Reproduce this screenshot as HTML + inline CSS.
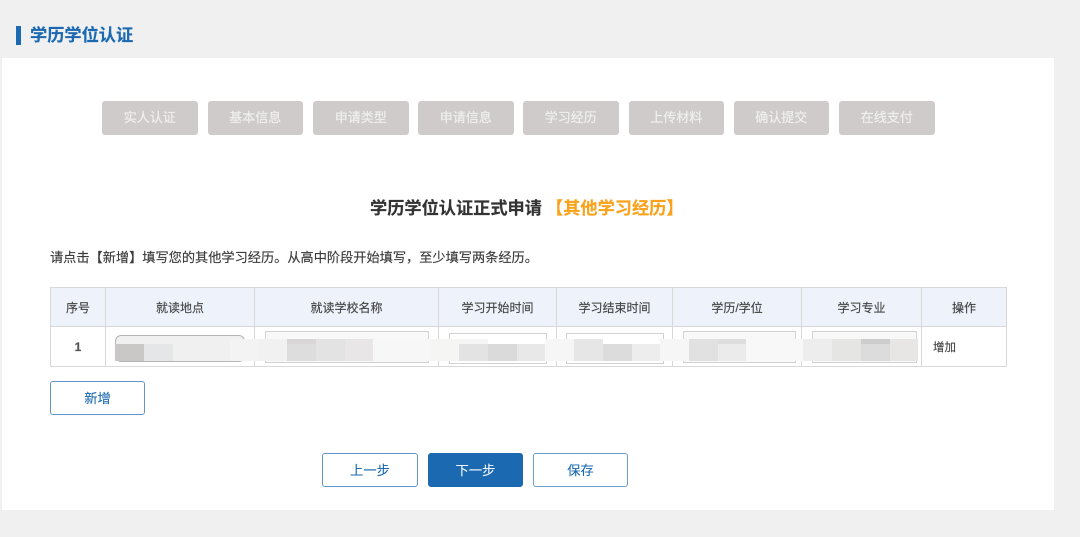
<!DOCTYPE html>
<html lang="zh-CN"><head><meta charset="utf-8"><title>学历学位认证</title>
<style>
html,body{margin:0;padding:0;width:1080px;height:537px;overflow:hidden;background:#f0f0f0}
body{font-family:"Liberation Sans","Noto Sans CJK SC",sans-serif;color:#444}
#w{left:0;top:0;width:1080px;height:537px;background:#f0f0f0;filter:blur(.35px)}
div{position:absolute;box-sizing:border-box}
.t{white-space:nowrap;text-align:center;line-height:20px;height:20px;-webkit-text-stroke:.15px currentColor}
.s{top:101px;width:95.500px;height:34px;background:#cfcbcb;border-radius:3px;color:#f0eeee;font-size:13px;line-height:34px;text-align:center;-webkit-text-stroke:.2px currentColor}
.l{background:#d8d8d8}
.h{top:288px;height:38px;background:#eef3fb}
.th{top:298px;font-size:12px}
.in{border:1px solid #d2d2d2;background:#fff}
.m{height:22px;top:339px}
.b{border:1px solid #1b69b0;border-radius:3px;background:#fff;color:#1b69b0;font-size:13.3px;text-align:center;height:34px;line-height:34px;-webkit-text-stroke:.1px currentColor}
</style></head><body><div id="w">
<div style="left:16px;top:26px;width:5px;height:19px;background:#1b69b0"></div>
<div class="t" style="left:30px;top:25px;font-size:17.2px;font-weight:700;color:#1b69b0">学历学位认证</div>
<div style="left:2px;top:58px;width:1052px;height:452px;background:#fff"></div>

<div class="s" style="left:102px">实人认证</div>
<div class="s" style="left:207.5px">基本信息</div>
<div class="s" style="left:313px">申请类型</div>
<div class="s" style="left:418px">申请信息</div>
<div class="s" style="left:523px">学习经历</div>
<div class="s" style="left:628.5px">上传材料</div>
<div class="s" style="left:733.500px">确认提交</div>
<div class="s" style="left:839px">在线支付</div>

<div class="t" style="left:370px;top:198px;font-size:17.2px;font-weight:700;color:#333">学历学位认证正式申请</div>
<div class="t" style="left:546px;top:198px;font-size:17.2px;font-weight:700;color:#f9a21b">【其他学习经历】</div>
<div class="t" style="left:50px;top:248px;font-size:13.2px;color:#3c3c3c">请点击【新增】填写您的其他学习经历。从高中阶段开始填写，至少填写两条经历。</div>

<div class="h" style="left:50px;width:956px"></div>
<div class="l" style="left:50px;top:287px;width:957px;height:1px"></div>
<div class="l" style="left:50px;top:326px;width:957px;height:1px"></div>
<div class="l" style="left:50px;top:366px;width:957px;height:1px"></div>
<div class="l" style="left:50px;top:287px;width:1px;height:80px"></div>
<div class="l" style="left:105px;top:287px;width:1px;height:80px"></div>
<div class="l" style="left:254px;top:287px;width:1px;height:80px"></div>
<div class="l" style="left:438px;top:287px;width:1px;height:80px"></div>
<div class="l" style="left:556px;top:287px;width:1px;height:80px"></div>
<div class="l" style="left:672px;top:287px;width:1px;height:80px"></div>
<div class="l" style="left:801px;top:287px;width:1px;height:80px"></div>
<div class="l" style="left:921px;top:287px;width:1px;height:80px"></div>
<div class="l" style="left:1006px;top:287px;width:1px;height:80px"></div>

<div class="t th" style="left:51px;width:54px">序号</div>
<div class="t th" style="left:106px;width:148px">就读地点</div>
<div class="t th" style="left:255px;width:183px">就读学校名称</div>
<div class="t th" style="left:439px;width:117px">学习开始时间</div>
<div class="t th" style="left:557px;width:115px">学习结束时间</div>
<div class="t th" style="left:673px;width:128px">学历/学位</div>
<div class="t th" style="left:802px;width:119px">学习专业</div>
<div class="t th" style="left:922px;width:84px">操作</div>

<div class="t" style="left:51px;width:54px;top:337px;font-size:12px;font-weight:700;color:#555">1</div>
<div class="t" style="left:933px;top:338px;font-size:11.500px;color:#444">增加</div>

<div class="in" style="left:115px;top:335px;width:130px;height:27px;border-radius:6px;border-color:#b5b5b5;background:#f0f0f0"></div>
<div class="in" style="left:265px;top:331px;width:164px;height:32px;background:#f8f8f8"></div>
<div class="in" style="left:449px;top:333px;width:98px;height:31px"></div>
<div class="in" style="left:566px;top:333px;width:98px;height:31px"></div>
<div class="in" style="left:683px;top:331px;width:113px;height:32px;background:#f8f8f8"></div>
<div class="in" style="left:812px;top:331px;width:105px;height:32px;background:#f8f8f8"></div>

<div class="m" style="left:115px;top:344px;width:29px;height:17px;background:#c9c8c6"></div>
<div class="m" style="left:144px;top:344px;width:29px;height:17px;background:#e5e6e8"></div>
<div class="m" style="left:173px;top:339px;width:57px;background:#f0f0f0"></div>
<div class="m" style="left:230px;top:339px;width:29px;background:#f3f3f3"></div>
<div class="m" style="left:259px;top:339px;width:28px;background:#f1f1f1"></div>
<div class="m" style="left:287px;top:339px;width:29px;height:5px;background:#d8d6d6"></div>
<div class="m" style="left:287px;top:344px;width:29px;height:17px;background:#dddddd"></div>
<div class="m" style="left:316px;top:339px;width:29px;background:#e3e3e3"></div>
<div class="m" style="left:345px;top:339px;width:28px;background:#e8e6e6"></div>
<div class="m" style="left:373px;top:339px;width:57px;background:#f7f7f7"></div>
<div class="m" style="left:430px;top:339px;width:29px;background:#f5f5f4"></div>
<div class="m" style="left:459px;top:339px;width:29px;height:5px;background:#f5f5f5"></div>
<div class="m" style="left:459px;top:344px;width:29px;height:17px;background:#e3e3e3"></div>
<div class="m" style="left:488px;top:344px;width:29px;height:17px;background:#dadada"></div>
<div class="m" style="left:517px;top:344px;width:28px;height:17px;background:#e8e8e8"></div>
<div class="m" style="left:545px;top:339px;width:29px;background:#f6f6f6"></div>
<div class="m" style="left:574px;top:339px;width:29px;background:#e5e6e5"></div>
<div class="m" style="left:603px;top:344px;width:29px;height:17px;background:#dcdcdc"></div>
<div class="m" style="left:632px;top:344px;width:28px;height:17px;background:#ededed"></div>
<div class="m" style="left:660px;top:339px;width:29px;background:#f6f6f6"></div>
<div class="m" style="left:689px;top:339px;width:29px;background:#e1e1e1"></div>
<div class="m" style="left:718px;top:339px;width:28px;height:5px;background:#dedede"></div>
<div class="m" style="left:718px;top:344px;width:28px;height:17px;background:#ebebeb"></div>
<div class="m" style="left:746px;top:339px;width:57px;background:#f8f8f8"></div>
<div class="m" style="left:803px;top:339px;width:29px;background:#ededed"></div>
<div class="m" style="left:832px;top:339px;width:29px;background:#e5e5e3"></div>
<div class="m" style="left:861px;top:339px;width:29px;height:5px;background:#cdcdcd"></div>
<div class="m" style="left:861px;top:344px;width:29px;height:17px;background:#dcdcdc"></div>
<div class="m" style="left:890px;top:339px;width:28px;background:#e7e6e4"></div>

<div class="b" style="left:50px;top:381px;width:95px;border-color:#5f97cc">新增</div>
<div class="b" style="left:322px;top:453px;width:96px;border-color:#5f97cc">上一步</div>
<div class="b" style="left:428px;top:453px;width:95px;background:#1b69b0;color:#f2f6fa">下一步</div>
<div class="b" style="left:533px;top:453px;width:95px;border-color:#6a9ccc">保存</div>
</div></body></html>
